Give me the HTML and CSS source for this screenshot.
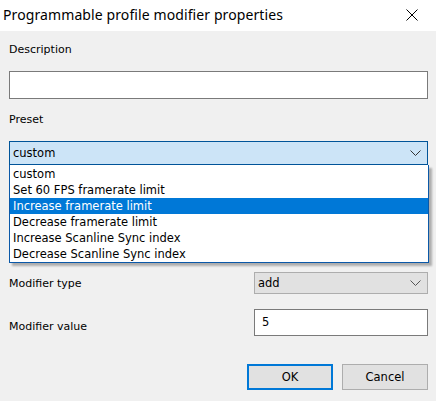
FILE: index.html
```html
<!DOCTYPE html>
<html>
<head>
<meta charset="utf-8">
<link rel="stylesheet" href="styles.css">
</head>
<body>
<div class="dialog">
  <div class="titlebar">
    <span class="title">Programmable profile modifier properties</span>
    <svg class="close" width="12" height="12" viewBox="0 0 12 12"><path d="M0.5 0.5 L11.5 11.5 M11.5 0.5 L0.5 11.5" stroke="#000" stroke-width="1" fill="none"/></svg>
  </div>
  <div class="content">
    <div class="label first">Description</div>
    <div class="edit wide"></div>
    <div class="label">Preset</div>
    <div class="preset-wrap">
      <div class="combo focused">
        <span>custom</span>
        <svg class="chev" width="11" height="6" viewBox="0 0 11 6"><path d="M0.5 0.5 L5.5 5.5 L10.5 0.5" stroke="#333" stroke-width="1" fill="none"/></svg>
      </div>
      <ul class="droplist">
        <li>custom</li>
        <li>Set 60 FPS framerate limit</li>
        <li class="sel">Increase framerate limit</li>
        <li>Decrease framerate limit</li>
        <li>Increase Scanline Sync index</li>
        <li>Decrease Scanline Sync index</li>
      </ul>
    </div>
    <div class="row type-row">
      <span class="rlabel">Modifier type</span>
      <div class="combo plain">
        <span>add</span>
        <svg class="chev" width="11" height="6" viewBox="0 0 11 6"><path d="M0.5 0.5 L5.5 5.5 L10.5 0.5" stroke="#555" stroke-width="1" fill="none"/></svg>
      </div>
    </div>
    <div class="row value-row">
      <span class="rlabel">Modifier value</span>
      <div class="edit small">5</div>
    </div>
    <div class="buttons">
      <div class="btn default">OK</div>
      <div class="btn">Cancel</div>
    </div>
  </div>
</div>
</body>
</html>
```
FILE: styles.css
```css
* { box-sizing: border-box; }
html, body { margin: 0; padding: 0; }
body {
  width: 436px;
  height: 401px;
  background: #f0f0f0;
  font-family: "DejaVu Sans", "Liberation Sans", sans-serif;
  font-size: 11px;
  color: #000;
  overflow: hidden;
}
.dialog { width: 436px; height: 401px; background: #f0f0f0; }
.titlebar {
  height: 31px;
  background: #fff;
  display: flex;
  align-items: center;
  justify-content: space-between;
  padding: 0 18px 0 3px;
}
.title {
  font-family: "Noto Sans", "Open Sans", sans-serif;
  font-size: 14px;
  letter-spacing: 0.1px;
  color: #000;
  position: relative;
  top: -1px;
}
.close { display: block; position: relative; top: -1px; }
.content { padding: 0 8px 0 9px; }
.label { height: 14px; line-height: 14px; }
.label.first { margin-top: 12px; }
.edit {
  background: #fff;
  border: 1px solid #7a7a7a;
}
.edit.wide { height: 28px; margin-top: 14px; margin-bottom: 14px; }
.preset-wrap { position: relative; margin-top: 14px; height: 131px; }
.combo {
  height: 24px;
  display: flex;
  align-items: center;
  justify-content: space-between;
  padding: 0 6px 0 3px;
}
.combo.focused {
  background: #cce4f7;
  border: 1px solid #005499;
  font-size: 11.5px;
}
.chev { display: block; }
.droplist {
  position: absolute;
  top: 24px;
  left: 0;
  width: 420px;
  margin: 0;
  padding: 0;
  list-style: none;
  background: #fff;
  border: 1px solid #0a58a8;
  border-top: none;
  box-shadow: 3px 3px 2px rgba(0,0,0,0.28);
  z-index: 2;
  padding-top: 1px;
}
.droplist li {
  height: 16px;
  line-height: 16px;
  padding-left: 3px;
  font-size: 11.5px;
  white-space: nowrap;
}
.droplist li.sel { background: #0078d7; color: #fff; }
.row { display: flex; align-items: center; justify-content: space-between; }
.type-row { height: 22px; }
.combo.plain {
  width: 174px;
  height: 22px;
  background: #e1e1e1;
  border: 1px solid #adadad;
  font-size: 11.5px;
}
.value-row { margin-top: 15px; height: 27px; }
.value-row .rlabel { position: relative; top: 4px; }
.edit.small {
  width: 174px;
  height: 27px;
  padding: 4px 0 0 7px;
  font-size: 11.5px;
  line-height: 16px;
}
.buttons {
  display: flex;
  justify-content: flex-end;
  gap: 9px;
  margin-top: 28px;
}
.btn {
  width: 86px;
  height: 26px;
  background: #e1e1e1;
  border: 1px solid #adadad;
  display: flex;
  align-items: center;
  justify-content: center;
  font-size: 11.5px;
}
.btn.default { border: 2px solid #0078d7; }
```
